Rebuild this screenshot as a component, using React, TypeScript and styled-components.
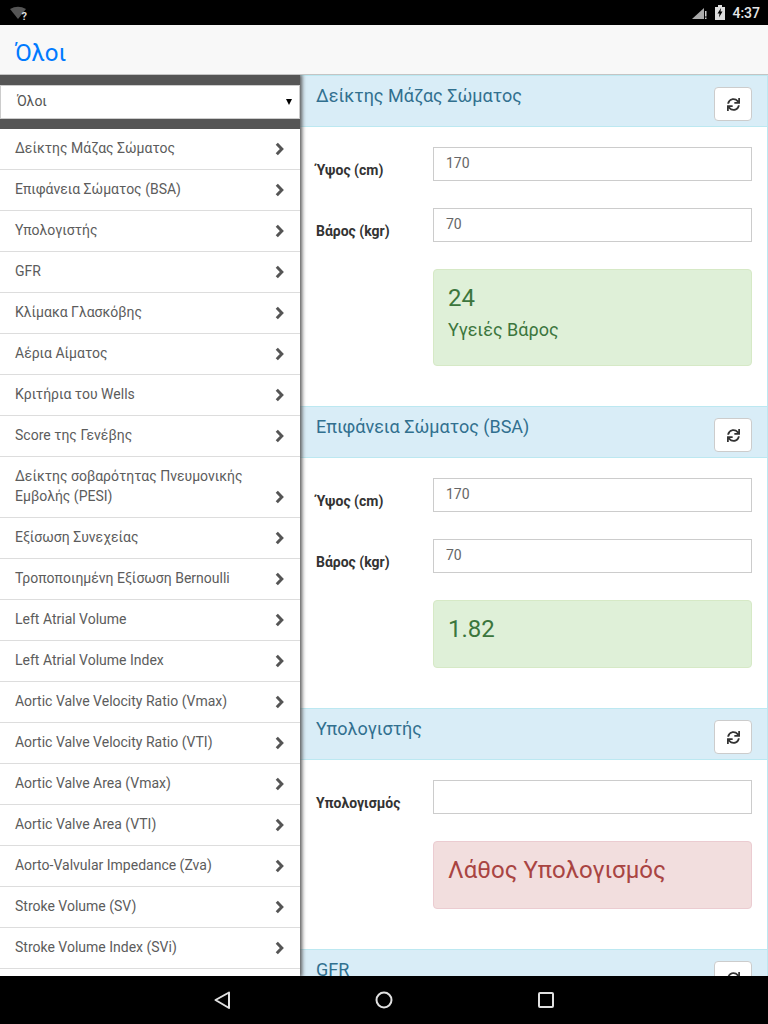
import React from "react";
import styled, { createGlobalStyle } from "styled-components";
import { FaSync } from "react-icons/fa";

const Global = createGlobalStyle`
  html, body { margin: 0; padding: 0; background: #fff; }
  * { box-sizing: border-box; }
  body { font-family: Roboto, "Noto Sans", sans-serif; }
`;

const Screen = styled.div`
  width: 768px; height: 1024px; display: flex; flex-direction: column; overflow: hidden;
`;
const StatusBar = styled.div`
  height: 25px; flex: none; background: #000; display: flex; align-items: center; justify-content: space-between;
  padding: 0 8px 0 10px; color: #e6e6e6; font-size: 14px; font-weight: 500;
`;
const StatusRight = styled.div`display: flex; align-items: center; gap: 7px;`;
const TopBar = styled.header`
  height: 50px; flex: none; background: #f8f8f8; border-bottom: 1px solid #c4c4c4; padding: 7px 15px 0;
  display: flex; align-items: center; color: #007aff; font-size: 24px; line-height: 40px;
`;
const Body = styled.div`flex: 1; min-height: 0; display: flex; overflow: hidden;`;
const Sidebar = styled.aside`
  width: 300px; flex: none; background: #fff; box-shadow: 1px 0 4px 1px #555; position: relative; z-index: 1;
`;
const SelectWrap = styled.div`background: #555; padding: 10px 0;`;
const SelectBox = styled.div`
  height: 34px; background: #fff; border: 1px solid #ccc; display: flex; align-items: center; justify-content: space-between;
  padding: 0 7px 2px 16px; font-size: 14px; color: #555;
`;
const Caret = styled.span`
  width: 0; height: 0; border-left: 3px solid transparent; border-right: 3px solid transparent; border-top: 6px solid #000;
  margin-top: 2px;
`;
const Item = styled.div`
  display: flex; justify-content: space-between; align-items: flex-end; min-height: 41px;
  padding: 9px 15px 11px 15px; border-bottom: 1px solid #ddd; font-size: 14px; line-height: 20px; color: #5c5c5c;
`;
const ItemText = styled.span`max-width: 240px;`;
const ChevronIcon = styled.svg`width: 9px; height: 14px; margin: 0 1px 2px 0; flex: none;`;
const Main = styled.main`flex: 1; min-width: 0; display: flex; flex-direction: column; border-right: 1px solid #bce8f1;`;
const Panel = styled.section<{ $gap: number }>`padding-bottom: ${(p) => p.$gap}px;`;
const Heading = styled.div`
  height: 52px; background: #d9edf7; border-top: 1px solid #bce8f1; border-bottom: 1px solid #bce8f1;
  padding: 10px 15px 0 16px; display: flex; justify-content: space-between; align-items: flex-start;
  color: #31708f; font-size: 18px; line-height: 20px;
`;
const RefreshButton = styled.div`
  width: 38px; height: 34px; background: #fff; border: 1px solid #ccc; border-radius: 4px; margin-top: 1px;
  display: flex; align-items: center; justify-content: center; color: #333; font-size: 13px;
`;
const PanelBody = styled.div`padding: 20px 15px 0 16px; display: flex; flex-direction: column; gap: 27px;`;
const Row = styled.div`display: flex;`;
const Label = styled.label`
  width: 117px; flex: none; font-size: 14px; font-weight: 700; color: #333; padding-top: 14px; line-height: 18px;
`;
const Input = styled.div`
  flex: 1; height: 34px; border: 1px solid #ccc; padding: 5px 12px; font-size: 14px; line-height: 20px; color: #666; background: #fff;
`;
const Alert = styled.div<{ $kind: "ok" | "err" }>`
  margin-left: 117px; padding: 15px 15px 15px 14px; border-radius: 4px; border: 1px solid ${(p) => (p.$kind === "ok" ? "#d6e9c6" : "#ebccd1")};
  background: ${(p) => (p.$kind === "ok" ? "#dff0d8" : "#f2dede")}; color: ${(p) => (p.$kind === "ok" ? "#3c763d" : "#a94442")};
`;
const AlertMain = styled.div`font-size: 24px; line-height: 26px; min-height: 36px;`;
const AlertSub = styled.div`font-size: 18px; line-height: 26px; margin: -4px 0 7px;`;

const items = [
  "Δείκτης Μάζας Σώματος", "Επιφάνεια Σώματος (BSA)", "Υπολογιστής", "GFR", "Κλίμακα Γλασκόβης", "Αέρια Αίματος",
  "Κριτήρια του Wells", "Score της Γενέβης", "Δείκτης σοβαρότητας Πνευμονικής Εμβολής (PESI)", "Εξίσωση Συνεχείας",
  "Τροποποιημένη Εξίσωση Bernoulli", "Left Atrial Volume", "Left Atrial Volume Index", "Aortic Valve Velocity Ratio (Vmax)",
  "Aortic Valve Velocity Ratio (VTI)", "Aortic Valve Area (Vmax)", "Aortic Valve Area (VTI)", "Aorto-Valvular Impedance (Zva)",
  "Stroke Volume (SV)", "Stroke Volume Index (SVi)",
];

const Chevron = () => (
  <ChevronIcon viewBox="0 0 9 14">
    <path d="M1.8 1.8 L6.8 7 L1.8 12.2" fill="none" stroke="#555" strokeWidth="3" />
  </ChevronIcon>
);

const Head = ({ title }: { title: string }) => (
  <Heading>
    <span>{title}</span>
    <RefreshButton><FaSync /></RefreshButton>
  </Heading>
);

const NavWrap = styled.nav`
  height: 48px; flex: none; background: #000; display: flex; align-items: center; justify-content: center; gap: 138px; position: relative; z-index: 2;
`;
function NavBar() {
  return (
    <NavWrap>
      <svg width="24" height="24" viewBox="0 0 24 24" fill="none" stroke="#e0e0e0" strokeWidth="2">
        <path d="M19 4.5 L5.5 12 L19 20 Z" strokeLinejoin="round" />
      </svg>
      <svg width="24" height="24" viewBox="0 0 24 24" fill="none" stroke="#e0e0e0" strokeWidth="2">
        <circle cx="12" cy="12" r="7.5" />
      </svg>
      <svg width="24" height="24" viewBox="0 0 24 24" fill="none" stroke="#e0e0e0" strokeWidth="2">
        <rect x="5" y="5" width="14" height="14" rx="1" />
      </svg>
    </NavWrap>
  );
}

export default function App() {
  return (
    <Screen>
      <Global />
      <StatusBar>
        <svg width="20" height="16" viewBox="0 0 20 16">
          <path d="M0 4 Q8 -0.5 16 4 L8 14 Z" fill="#555" />
          <text x="11.5" y="14.5" fontSize="11" fontWeight="700" fill="#ddd" fontFamily="Roboto">?</text>
        </svg>
        <StatusRight>
          <svg width="17" height="14" viewBox="0 0 17 14">
            <path d="M1 13 L13 2 V13 Z" fill="#aaa" />
            <rect x="14" y="5" width="1.5" height="5.5" fill="#ccc" />
            <rect x="14" y="11.5" width="1.5" height="1.5" fill="#ccc" />
          </svg>
          <svg width="10" height="15" viewBox="0 0 10 15">
            <path d="M0 2 H3 V0 H7 V2 H10 V15 H0 Z" fill="#ddd" />
            <path d="M6 3 L2.5 8.5 H4.5 L4 12.5 L7.5 6.5 H5.5 Z" fill="#000" />
          </svg>
          <span>4:37</span>
        </StatusRight>
      </StatusBar>
      <TopBar>Όλοι</TopBar>
      <Body>
        <Sidebar>
          <SelectWrap>
            <SelectBox><span>Όλοι</span><Caret /></SelectBox>
          </SelectWrap>
          {items.map((t) => (
            <Item key={t}><ItemText>{t}</ItemText><Chevron /></Item>
          ))}
        </Sidebar>
        <Main>
          <Panel $gap={40}>
            <Head title="Δείκτης Μάζας Σώματος" />
            <PanelBody>
              <Row><Label>Ύψος (cm)</Label><Input>170</Input></Row>
              <Row><Label>Βάρος (kgr)</Label><Input>70</Input></Row>
              <Alert $kind="ok"><AlertMain>24</AlertMain><AlertSub>Υγειές Βάρος</AlertSub></Alert>
            </PanelBody>
          </Panel>
          <Panel $gap={40}>
            <Head title="Επιφάνεια Σώματος (BSA)" />
            <PanelBody>
              <Row><Label>Ύψος (cm)</Label><Input>170</Input></Row>
              <Row><Label>Βάρος (kgr)</Label><Input>70</Input></Row>
              <Alert $kind="ok"><AlertMain>1.82</AlertMain></Alert>
            </PanelBody>
          </Panel>
          <Panel $gap={40}>
            <Head title="Υπολογιστής" />
            <PanelBody>
              <Row><Label>Υπολογισμός</Label><Input /></Row>
              <Alert $kind="err"><AlertMain>Λάθος Υπολογισμός</AlertMain></Alert>
            </PanelBody>
          </Panel>
          <Panel $gap={0}>
            <Head title="GFR" />
          </Panel>
        </Main>
      </Body>
      <NavBar />
    </Screen>
  );
}
